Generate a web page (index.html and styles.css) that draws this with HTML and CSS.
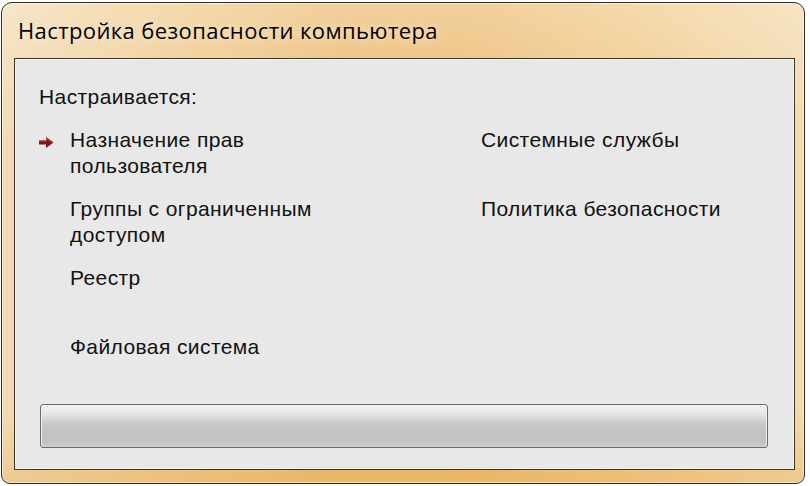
FILE: index.html
```html
<!DOCTYPE html>
<html lang="ru">
<head>
    <meta charset="UTF-8">
    <title>Настройка безопасности компьютера</title>
    <link rel="stylesheet" href="styles.css">
</head>
<body>

<div class="window">
    <div class="window-title">Настройка безопасности компьютера</div>

    <div class="window-body">
        <div class="status-label">Настраивается:</div>

        <div class="task-grid">
            <div class="task-mark">
                <svg width="15" height="11" viewBox="0 0 15 11">
                    <path d="M0 3.5 H7 V0 L14.5 5.5 L7 11 V7.5 H0 Z" fill="#7d1717"/>
                    <path d="M0 3.5 H7 V0 L14.5 5.5 L13 5.5 L8 2 V4.5 H0 Z" fill="#b84444"/>
                </svg>
            </div>
            <div class="task">Назначение прав<br>пользователя</div>
            <div class="task">Системные службы</div>

            <div class="task-mark"></div>
            <div class="task">Группы с ограниченным<br>доступом</div>
            <div class="task">Политика безопасности</div>

            <div class="task-mark"></div>
            <div class="task">Реестр</div>
            <div class="task"></div>

            <div class="task-mark"></div>
            <div class="task">Файловая система</div>
            <div class="task"></div>
        </div>

        <div class="progress"></div>
    </div>
</div>

</body>
</html>
```

FILE: styles.css
```css
body {
    margin: 0;
    background-color: #ffffff;
    font-family: "Liberation Sans", Arial, sans-serif;
    color: #111;
}
.window {
    margin: 2px 0 0 1px;
    width: 804px;
    height: 482px;
    box-sizing: border-box;
    border: 1px solid #2c2a26;
    border-radius: 11px 11px 9px 9px;
    padding: 0 9px 13px 12px;
    display: flex;
    flex-direction: column;
    background:
        linear-gradient(180deg, rgba(255,255,255,0.3) 0%, rgba(255,255,255,0) 30%, rgba(255,255,255,0) 85%, rgba(230,170,80,0.35) 100%),
        linear-gradient(90deg, #f2dbb3 0%, #efca8c 22%, #ebbb72 42%, #ecbb72 58%, #f0c987 78%, #f3d9ad 100%);
    box-shadow: inset 0 0 0 1px rgba(255,255,255,0.55);
}
.window-title {
    height: 55px;
    flex-shrink: 0;
    padding-left: 4px;
    font-family: "Open Sans", "Noto Sans", sans-serif;
    font-size: 22px;
    letter-spacing: 0.4px;
    line-height: 54px;
    color: #000;
    text-shadow: 0 0 8px rgba(255,245,225,0.9);
}
.window-body {
    flex: 1;
    border: 1px solid #3e3526;
    background-color: #e8e8e8;
    box-shadow: inset 0 0 0 1px #f4f4f4;
    padding: 25px 26px 21px 24px;
    display: flex;
    flex-direction: column;
}
.status-label {
    font-size: 21px;
    letter-spacing: 0.4px;
    line-height: 26px;
}
.task-grid {
    display: grid;
    grid-template-columns: 31px 411px 1fr;
    grid-auto-rows: 69px;
    margin-top: 17px;
}
.task-mark {
    padding-top: 7px;
}
.task {
    font-size: 21px;
    letter-spacing: 0.4px;
    line-height: 26px;
}
.progress {
    margin: auto 0 0 1px;
    height: 44px;
    box-sizing: border-box;
    border: 1px solid #6a6a6a;
    border-radius: 3px;
    background: linear-gradient(180deg, #f2f2f2 0%, #e6e6e6 20%, #cfcfcf 38%, #c4c4c4 55%, #c2c2c2 85%, #cfcfcf 100%);
    box-shadow: inset 1px 0 0 #f0f0f0, inset -1px 0 0 #f0f0f0;
}
```
